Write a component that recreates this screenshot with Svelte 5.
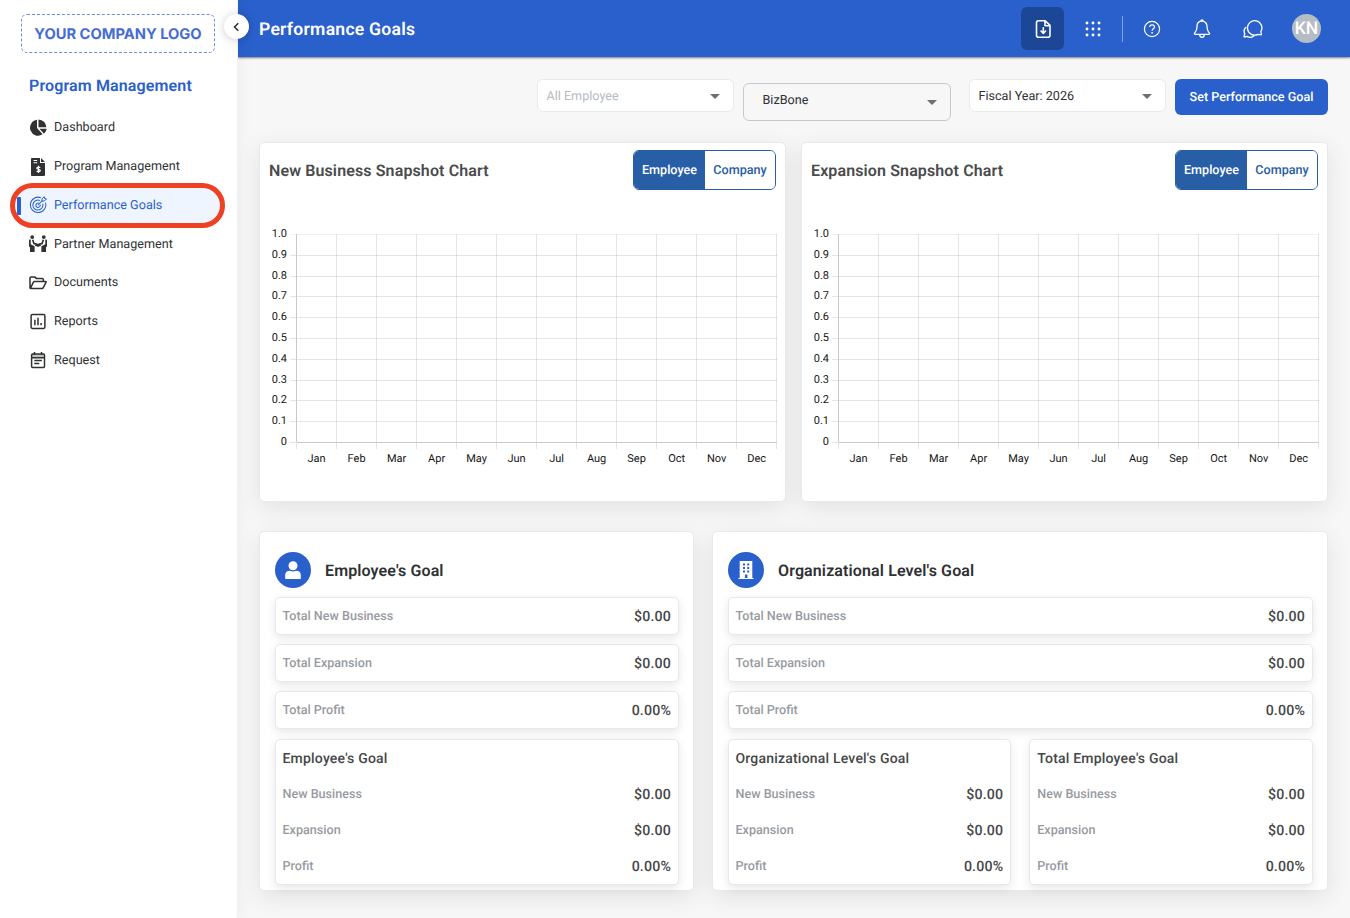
<script lang="ts">
  type Row = { label: string; value: string };

  const menu = [
    { id: "dashboard", label: "Dashboard" },
    { id: "program", label: "Program Management" },
    { id: "goals", label: "Performance Goals" },
    { id: "partner", label: "Partner Management" },
    { id: "documents", label: "Documents" },
    { id: "reports", label: "Reports" },
    { id: "request", label: "Request" },
  ];
  const months = ["Jan", "Feb", "Mar", "Apr", "May", "Jun", "Jul", "Aug", "Sep", "Oct", "Nov", "Dec"];
  const levels = ["1.0", "0.9", "0.8", "0.7", "0.6", "0.5", "0.4", "0.3", "0.2", "0.1", "0"];

  const totals: Row[] = [
    { label: "Total New Business", value: "$0.00" },
    { label: "Total Expansion", value: "$0.00" },
    { label: "Total Profit", value: "0.00%" },
  ];
  const breakdown: Row[] = [
    { label: "New Business", value: "$0.00" },
    { label: "Expansion", value: "$0.00" },
    { label: "Profit", value: "0.00%" },
  ];

  let active = $state("goals");
  let charts = $state([
    { title: "New Business Snapshot Chart", scope: "Employee" },
    { title: "Expansion Snapshot Chart", scope: "Employee" },
  ]);
</script>

{#snippet menuIcon(id: string)}
  <svg class="menu-icon" viewBox="0 0 18 18" fill="none" stroke="currentColor" stroke-width="1.5">
    {#if id === "dashboard"}
      <path fill="currentColor" stroke="none" d="M8 .8V9.1l5.6 6.2A8 8 0 1 1 8 .8Z" />
      <path fill="currentColor" stroke="none" d="M9.5.4a8 8 0 0 1 7.8 7.9H9.5ZM10.5 9.8h7.2a8 8 0 0 1-2.7 4.9Z" />
    {:else if id === "program"}
      <path fill="currentColor" stroke="none" fill-rule="evenodd" d="M2 1q0-1 1-1h8v5h5v12q0 1-1 1H3q-1 0-1-1ZM4.500 2v1.100h3.700V2ZM4.500 4.200v1.100h3.700V4.200Z" />
      <path fill="currentColor" stroke="none" d="M12 0l4 4h-4Z" />
      <path stroke="#fff" stroke-width="1.2" d="M11.200 9.700c-.7-.9-3.400-.8-3.400.5 0 1.500 3.500.7 3.500 2.300 0 1.300-2.800 1.400-3.700.4M9.500 7.800v7.200" />
    {:else if id === "goals"}
      <path stroke-width="1.05" d="M11.900 1.700a7.700 7.700 0 1 0 4.600 5M10.900 4.500a5 5 0 1 0 2.800 3.200M9.700 7.100a2.200 2.200 0 1 0 1.500 1.600M8.900 9.200l4.500-4.700" />
      <path stroke-width="1" d="M12.900 5.200l.1-2.400L15.300.7l.3 1.800 1.900.4-2.200 2.200Z" />
    {:else if id === "partner"}
      <circle cx="3.2" cy="2.100" r="1.900" fill="currentColor" stroke="none" />
      <circle cx="14.800" cy="2.100" r="1.900" fill="currentColor" stroke="none" />
      <path fill="currentColor" stroke="none" d="M0 5.300q0-.8.8-.8h.9v4.800l3.900 2V17H1v-4.700L0 11.500ZM18 5.300q0-.8-.8-.8h-.9v4.800l-3.900 2V17H17v-4.700l1-.8Z" />
      <path stroke-width="1.700" stroke-linejoin="round" d="M3.600 4.700l1.500 4 2.400.4 1.500.8 1.500-.8 2.400-.4 1.500-4M6.200 10l2.800.9 2.800-.9" />
    {:else if id === "documents"}
      <path stroke-linejoin="round" d="M1 14.200V3.900q0-1 1-1h3.800l1.700 1.700h5.800q1 0 1 1v2M1.400 14.400l3-6.300q.3-.6 1-.6h11.200q.8 0 .5.700l-2.800 5.500q-.4.800-1.300.8H1.700q-.7 0-.7-.7" />
    {:else if id === "reports"}
      <rect x="2.100" y="1.600" width="13.800" height="13.800" rx="1.300" />
      <path d="M5.900 6.700v5.600M9 4.700v7.600M12.100 9.900v2.400" />
    {:else}
      <path fill="currentColor" fill-opacity=".3" stroke="none" d="M2.800 1.900h12.500v3.700H2.800Z" />
      <rect x="2.600" y="1.900" width="12.900" height="13.500" rx="1.100" />
      <path d="M2.600 5.800h12.900M5.500 0v2.800M12.500 0v2.800M5.300 8.500h7.600M5.300 11.600h5" />
    {/if}
  </svg>
{/snippet}

{#snippet caret()}
  <svg class="caret" viewBox="0 0 10 5"><path d="M0 0h10L5 5Z" fill="currentColor" /></svg>
{/snippet}

{#snippet totalRows()}
  {#each totals as row}
    <div class="box total">
      <span class="label">{row.label}</span>
      <span class="value">{row.value}</span>
    </div>
  {/each}
{/snippet}

{#snippet goalBox(title: string)}
  <div class="box goal-box">
    <h3>{title}</h3>
    {#each breakdown as row}
      <div class="goal-row">
        <span class="label">{row.label}</span>
        <span class="value">{row.value}</span>
      </div>
    {/each}
  </div>
{/snippet}

<div class="app">
  <aside class="sidebar">
    <div class="logo">YOUR COMPANY LOGO</div>
    <h2>Program Management</h2>
    <nav>
      {#each menu as item}
        <button class="menu-item" class:active={active === item.id} onclick={() => (active = item.id)}>
          {@render menuIcon(item.id)}
          <span>{item.label}</span>
        </button>
      {/each}
    </nav>
    <button class="collapse" aria-label="Collapse menu">
      <svg viewBox="0 0 12 12" fill="none" stroke="currentColor" stroke-width="1.6"><path d="M7.3 2.2 3.5 6l3.8 3.8" /></svg>
    </button>
  </aside>

  <div class="content">
    <header class="topbar">
      <h1>Performance Goals</h1>
      <div class="tools">
        <button class="tool download" aria-label="Download">
          <svg width="20" height="20" viewBox="0 0 20 20" fill="none" stroke="#fff" stroke-width="1.6" stroke-linecap="round" stroke-linejoin="round">
            <path d="M5.500 1.700h6.700l4.800 4.700v9.900q0 2-2 2H5.500q-2 0-2-2V3.700q0-2 2-2ZM12 2v4.700h4.800M10.300 8.700v5.500M8 12l2.300 2.400 2.300-2.400" />
          </svg>
        </button>
        <button class="tool apps" aria-label="Apps">
          <svg width="16" height="16" viewBox="0 0 16 16" fill="#fff">
            {#each [2, 8, 14] as y}
              {#each [2, 8, 14] as x}
                <circle cx={x} cy={y} r="1.45" />
              {/each}
            {/each}
          </svg>
        </button>
        <span class="divider"></span>
        <button class="tool help" aria-label="Help">
          <svg width="18" height="18" viewBox="0 0 18 18" fill="none" stroke="#fff" stroke-width="1.2">
            <circle cx="9" cy="9" r="7.6" />
            <path d="M6.700 7.100c0-3.100 4.800-3 4.700-.2 0 1.800-2.300 1.800-2.300 3.800" />
            <circle cx="9.1" cy="12.8" r=".9" fill="#fff" stroke="none" />
          </svg>
        </button>
        <button class="tool bell" aria-label="Notifications">
          <svg width="20" height="20" viewBox="0 0 20 20" fill="none" stroke="#fff" stroke-width="1.3" stroke-linejoin="round">
            <path d="M10 2.200c-3.200 0-5 2.300-5 5.300 0 4.200-1.100 5.200-2.300 6.500-.5.7-.3 1.300.5 1.300h13.600c.8 0 1-.6.5-1.300-1.200-1.300-2.300-2.300-2.300-6.500 0-3-1.800-5.300-5-5.300ZM8.800 2.300q0-1.300 1.200-1.300t1.200 1.300M7.700 15.500c0 3.700 4.600 3.700 4.600 0" />
          </svg>
        </button>
        <button class="tool chat" aria-label="Messages">
          <svg width="21" height="20" viewBox="0 0 21 20" fill="none" stroke="#fff" stroke-width="1.3" stroke-linejoin="round">
            <path d="M19.400 15.100l-.6-2.400a7.200 7.200 0 1 0-2.800 2.600c.9-.1 1.800.4 2.800.5q.8 0 .6-.7Z" />
            <path d="M4.200 8.100C1.900 10.200 1.600 12.600 2.800 14.800L2 17.200q-.2.900.8.800l2.200-.6c2.600 1.500 5.200 1.200 7.400-.8" />
          </svg>
        </button>
        <span class="avatar">KN</span>
      </div>
    </header>

    <main>
      <div class="filters">
        <div class="select placeholder">All Employee {@render caret()}</div>
        <div class="select company">BizBone {@render caret()}</div>
        <div class="select">Fiscal Year: 2026 {@render caret()}</div>
        <button class="primary">Set Performance Goal</button>
      </div>

      <div class="charts">
        {#each charts as chart}
          <section class="card chart-card">
            <div class="chart-head">
              <h2>{chart.title}</h2>
              <div class="switch">
                {#each ["Employee", "Company"] as scope}
                  <button class:on={chart.scope === scope} onclick={() => (chart.scope = scope)}>{scope}</button>
                {/each}
              </div>
            </div>
            <svg class="plot" width="524" height="250" viewBox="0 0 524 250">
              {#each levels as level, i}
                {@const y = Math.round(11 + i * 20.8) + 0.5}
                <line x1="29" x2="516" y1={y} y2={y} stroke={i === 0 ? "#f1f1f1" : "#e5e5e5"} />
                <text x="26" y={14 + i * 20.8} text-anchor="end">{level}</text>
              {/each}
              {#each months as month, i}
                <line x1={75.5 + i * 40} x2={75.5 + i * 40} y1="11" y2="226" stroke="#000" stroke-opacity=".1" />
                <text x={55.6 + i * 40} y="239" text-anchor="middle">{month}</text>
              {/each}
              <path d="M35.5 11v208.5h480" fill="none" stroke="#c9c9c9" />
              <path d="M35.5 219v7" stroke="#e5e5e5" />
            </svg>
          </section>
        {/each}
      </div>

      <div class="goals">
        <section class="card goal-card">
          <div class="goal-head">
            <span class="badge">
              <svg width="18" height="20" viewBox="0 0 18 20" fill="#fff">
                <circle cx="9" cy="5.7" r="4.5" />
                <path d="M1.200 18.500v-3.200q0-4.500 4.500-4.500 3.300 1.400 6.600 0 4.500 0 4.500 4.500v3.200q0 .5-.5.5H1.700q-.5 0-.5-.5Z" />
              </svg>
            </span>
            <h2>Employee's Goal</h2>
          </div>
          {@render totalRows()}
          <div class="split">
            {@render goalBox("Employee's Goal")}
          </div>
        </section>

        <section class="card goal-card">
          <div class="goal-head">
            <span class="badge">
              <svg width="18" height="20" viewBox="0 0 18 20">
                <path fill="#fff" d="M2.700 1h12.600v16.900h1.200V19H1.500v-1.100h1.200Z" />
                <path fill="#2960cb" d="M6 3.600h2v2H6ZM10.200 3.600h2v2h-2ZM6 7h2v2H6ZM10.200 7h2v2h-2ZM6 10.400h2v2H6ZM10.200 10.400h2v2h-2ZM7.900 14.600h2.500v3.300H7.900Z" />
              </svg>
            </span>
            <h2>Organizational Level's Goal</h2>
          </div>
          {@render totalRows()}
          <div class="split two">
            {@render goalBox("Organizational Level's Goal")}
            {@render goalBox("Total Employee's Goal")}
          </div>
        </section>
      </div>
    </main>
  </div>
</div>

<style>
  :global(body) {
    overflow: hidden;
  }

  .app {
    display: grid;
    grid-template-columns: 238px 1fr;
    height: 918px;
    font-family: Roboto, "Liberation Sans", sans-serif;
    text-rendering: geometricPrecision;
    background: #f7f7f7;
    color: #2f3133;
  }

  .app :is(h1, h2, h3) {
    margin: 0;
  }

  button {
    font: inherit;
    letter-spacing: inherit;
    text-rendering: inherit;
    border: 0;
    padding: 0;
    cursor: pointer;
  }

  /* ---- Sidebar ---- */
  .sidebar {
    position: relative;
    z-index: 2;
    box-sizing: border-box;
    padding-top: 14px;
    background: #fff;
    border-right: 1px solid #f0f0f0;
    box-shadow: 0 0 16px rgba(0, 0, 0, 0.05);
  }

  .logo {
    box-sizing: border-box;
    width: 194px;
    height: 39px;
    margin-left: 21px;
    border: 1px dashed #7189e2;
    border-radius: 6px;
    color: #456bd5;
    font: 700 14.7px/38px Inter, sans-serif;
    text-align: center;
    white-space: nowrap;
  }

  .sidebar h2 {
    margin: 22px 0 20px 29px;
    color: #2960cb;
    font-size: 16px;
    line-height: 21px;
    font-weight: 600;
    letter-spacing: 0.13px;
  }

  nav {
    display: grid;
    grid-auto-rows: 38.8px;
    margin-top: -8px;
  }

  .menu-item {
    display: flex;
    align-items: center;
    gap: 7px;
    margin-left: 10px;
    width: 215px;
    padding: 0.8px 0 0 19px;
    box-sizing: border-box;
    background: none;
    color: #2f3133;
    font-size: 12.6px;
    letter-spacing: 0.01px;
    text-align: left;
  }

  .menu-icon {
    width: 18px;
    height: 18px;
    flex-shrink: 0;
  }

  .menu-item.active {
    position: relative;
    height: 45px;
    margin-top: -3px;
    padding-left: 14px;
    border: 5px solid #ee4023;
    border-radius: 23px;
    background: #eff5fe;
    color: #2960cb;
  }

  .menu-item.active::before {
    content: "";
    position: absolute;
    left: 2px;
    top: 9px;
    width: 4px;
    height: 18px;
    border-radius: 1px;
    background: #2960cb;
  }

  .collapse {
    position: absolute;
    right: -12px;
    top: 14px;
    display: grid;
    place-items: center;
    width: 25px;
    height: 25px;
    border-radius: 50%;
    background: #fff;
    color: #333;
    box-shadow: 0 1px 10px rgba(0, 0, 0, 0.2);
  }

  .collapse svg {
    width: 12px;
  }

  /* ---- Top bar ---- */
  .topbar {
    display: flex;
    align-items: center;
    justify-content: space-between;
    box-sizing: border-box;
    height: 57px;
    padding: 0 29px 0 21px;
    background: #2960cb;
    color: #fff;
    box-shadow: 0 1px 2px rgba(0, 0, 0, 0.5);
  }

  h1 {
    padding-top: 2px;
    font-size: 17.6px;
    font-weight: 600;
    letter-spacing: 0.24px;
  }

  .tools {
    display: flex;
    align-items: center;
  }

  .tool {
    display: grid;
    place-items: center;
    background: none;
  }

  .download {
    width: 43px;
    height: 43px;
    border-radius: 6px;
    background: #1c4796;
  }

  .apps {
    margin-left: 21px;
  }

  .divider {
    width: 1px;
    height: 26px;
    margin-left: 20.6px;
    background: #86a2dc;
  }

  .help {
    margin-left: 20px;
  }

  .bell {
    margin-left: 31px;
  }

  .chat {
    margin-left: 30px;
  }

  .avatar {
    box-sizing: border-box;
    width: 29px;
    height: 29px;
    margin-left: 29px;
    padding-top: 1px;
    border-radius: 50%;
    background: #b4bcc4;
    font-size: 17.5px;
    line-height: 28px;
    font-weight: 500;
    text-align: center;
  }

  /* ---- Filters ---- */
  main {
    padding: 22px 22px 0 21px;
  }

  .filters {
    display: flex;
    justify-content: flex-end;
    height: 63px;
  }

  .select {
    display: flex;
    align-items: center;
    justify-content: space-between;
    box-sizing: border-box;
    width: 197px;
    height: 33px;
    padding: 1px 13px 0 8.5px;
    border: 1px solid #e9eaec;
    border-radius: 6px;
    background: #fff;
    font-size: 12.6px;
  }

  .select.placeholder {
    color: #b4bbc4;
  }

  .select.company {
    width: 208px;
    height: 38px;
    margin: 4px 18px 0 9px;
    padding: 0 13px 3px 18.5px;
    border-color: #c4c8d1;
    background: none;
  }

  .caret {
    width: 10px;
    height: 5px;
    color: #707070;
  }

  .company .caret {
    position: relative;
    top: 2px;
  }

  .primary {
    width: 153px;
    height: 36px;
    margin-left: 9px;
    padding-top: 1px;
    border-radius: 6px;
    background: #2960cb;
    color: #fff;
    font-size: 12.6px;
    font-weight: 500;
  }

  /* ---- Cards ---- */
  .card {
    box-sizing: border-box;
    border: 1px solid #e9e9e9;
    border-radius: 5px;
    background: #fff;
    box-shadow: 0 6px 24px rgba(0, 0, 0, 0.09);
  }

  .card h2 {
    font-size: 16px;
    font-weight: 600;
    letter-spacing: 0.12px;
  }

  .charts {
    display: grid;
    grid-template-columns: 1fr 1fr;
    gap: 15px;
    height: 360px;
  }

  .chart-head {
    display: flex;
    align-items: center;
    justify-content: space-between;
    height: 40px;
    padding: 7px 9px 0;
  }

  .chart-head h2 {
    color: #4a4b4c;
  }

  .switch {
    display: grid;
    grid-template-columns: 71px 1fr;
    box-sizing: border-box;
    width: 143px;
    height: 40px;
    border: 1px solid #285ea5;
    border-radius: 6px;
    overflow: hidden;
  }

  .switch button {
    padding-top: 1px;
    background: #fff;
    color: #285ea5;
    font-size: 12.6px;
    font-weight: 500;
  }

  .switch .on {
    background: #285ea5;
    color: #fff;
  }

  .plot {
    display: block;
    margin: 33px 0 0 1px;
  }

  .plot text {
    fill: #151515;
    font-size: 11px;
  }

  /* ---- Goals ---- */
  .goals {
    display: grid;
    grid-template-columns: 435px 1fr;
    gap: 18px;
    height: 360px;
    margin-top: 29px;
  }

  .goal-card {
    padding: 20px 14px 0 14.5px;
  }

  .goal-head {
    display: flex;
    align-items: center;
    gap: 14.5px;
    margin-bottom: 9.4px;
  }

  .badge {
    display: grid;
    place-items: center;
    width: 36px;
    height: 36px;
    border-radius: 50%;
    background: #2960cb;
  }

  .box {
    box-sizing: border-box;
    border: 1px solid #e6e8ea;
    border-radius: 5px;
    background: #fff;
    box-shadow: 0 3px 10px rgba(0, 0, 0, 0.1);
  }

  .total,
  .goal-row {
    display: flex;
    align-items: center;
    justify-content: space-between;
  }

  .total {
    height: 37.6px;
    margin-bottom: 9.2px;
    padding: 1.5px 7px 0;
  }

  .split {
    display: grid;
    gap: 18px;
    margin-top: 10.6px;
  }

  .split.two {
    grid-template-columns: 1fr 1fr;
  }

  .goal-box {
    height: 145.4px;
    padding: 0.8px 7px 0;
  }

  .goal-box h3 {
    color: #454748;
    font-size: 14px;
    line-height: 36px;
    font-weight: 500;
    letter-spacing: 0.2px;
  }

  .goal-row {
    height: 36px;
  }

  .label {
    color: #979ba1;
    font-size: 12.6px;
    font-weight: 500;
  }

  .value {
    color: #454748;
    font-size: 14.2px;
    font-weight: 500;
    letter-spacing: 0.15px;
  }
</style>
